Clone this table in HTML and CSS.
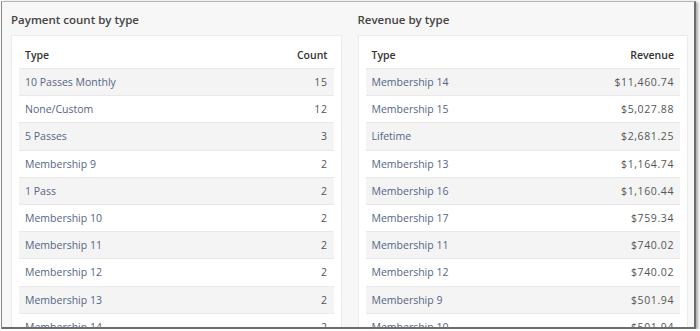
FILE: index.html
```html
<!DOCTYPE html>
<html lang="en">
<head>
    <meta charset="UTF-8">
    <title>Payments by type</title>
    <link rel="stylesheet" href="styles.css">
</head>
<body>
    <div class="frame">
        <section class="panel">
            <h2 class="panel-title">Payment count by type</h2>
            <div class="card">
                <table class="data-table">
                    <thead>
                        <tr><th>Type</th><th class="num">Count</th></tr>
                    </thead>
                    <tbody>
                        <tr><td class="name">10 Passes Monthly</td><td class="num">15</td></tr>
                        <tr><td class="name">None/Custom</td><td class="num">12</td></tr>
                        <tr><td class="name">5 Passes</td><td class="num">3</td></tr>
                        <tr><td class="name">Membership 9</td><td class="num">2</td></tr>
                        <tr><td class="name">1 Pass</td><td class="num">2</td></tr>
                        <tr><td class="name">Membership 10</td><td class="num">2</td></tr>
                        <tr><td class="name">Membership 11</td><td class="num">2</td></tr>
                        <tr><td class="name">Membership 12</td><td class="num">2</td></tr>
                        <tr><td class="name">Membership 13</td><td class="num">2</td></tr>
                        <tr><td class="name">Membership 14</td><td class="num">2</td></tr>
                    </tbody>
                </table>
            </div>
        </section>
        <section class="panel">
            <h2 class="panel-title">Revenue by type</h2>
            <div class="card">
                <table class="data-table">
                    <thead>
                        <tr><th>Type</th><th class="num">Revenue</th></tr>
                    </thead>
                    <tbody>
                        <tr><td class="name">Membership 14</td><td class="num">$11,460.74</td></tr>
                        <tr><td class="name">Membership 15</td><td class="num">$5,027.88</td></tr>
                        <tr><td class="name">Lifetime</td><td class="num">$2,681.25</td></tr>
                        <tr><td class="name">Membership 13</td><td class="num">$1,164.74</td></tr>
                        <tr><td class="name">Membership 16</td><td class="num">$1,160.44</td></tr>
                        <tr><td class="name">Membership 17</td><td class="num">$759.34</td></tr>
                        <tr><td class="name">Membership 11</td><td class="num">$740.02</td></tr>
                        <tr><td class="name">Membership 12</td><td class="num">$740.02</td></tr>
                        <tr><td class="name">Membership 9</td><td class="num">$501.94</td></tr>
                        <tr><td class="name">Membership 10</td><td class="num">$501.94</td></tr>
                    </tbody>
                </table>
            </div>
        </section>
    </div>
</body>
</html>
```

FILE: styles.css
```css
/* Page */
body {
    margin: 0;
    background-color: #ffffff;
    font-family: 'Open Sans', 'Liberation Sans', sans-serif;
    color: #333;
    overflow: hidden;
}

.frame {
    margin: 1px 0 0 1px;
    width: 695px;
    height: 328px;
    padding: 0 6px 0 9px;
    box-sizing: border-box;
    background-color: #f7f7f7;
    border-left: 1px solid #8a8a8a;
    border-top: 1px solid #b5b5b5;
    border-right: 2px solid #6d6d6d;
    box-shadow: 2px 1px 3px rgba(0, 0, 0, 0.35);
    display: flex;
    gap: 16px;
    overflow: hidden;
    position: relative;
}

.frame::after {
    content: "";
    position: absolute;
    left: 0;
    right: 0;
    bottom: 0;
    height: 2px;
    background-color: #6d6d6d;
}

/* Panels */
.panel {
    flex: 1;
    min-width: 0;
    display: flex;
    flex-direction: column;
}

.panel-title {
    margin: 0;
    height: 33px;
    line-height: 36px;
    font-size: 11.5px;
    font-weight: 600;
    color: #444;
}

.card {
    background-color: #ffffff;
    border: 1px solid #ececec;
    padding: 6px 7px 0;
}

/* Table */
.data-table {
    width: 100%;
    border-collapse: collapse;
    font-size: 10.5px;
}

.data-table th,
.data-table td {
    height: 26.2px;
    padding: 0 6px;
    text-align: left;
    border-bottom: 1px solid #e9e9e9;
}

.data-table th {
    font-weight: 600;
    color: #333;
    height: 26px;
}

.data-table tbody tr:nth-child(odd) {
    background-color: #f4f4f4;
}

.data-table .num {
    text-align: right;
    color: #555;
}

.data-table td.num {
    letter-spacing: 0.6px;
}

.data-table th.num {
    color: #333;
}

.data-table .name {
    color: #536685;
}
```
